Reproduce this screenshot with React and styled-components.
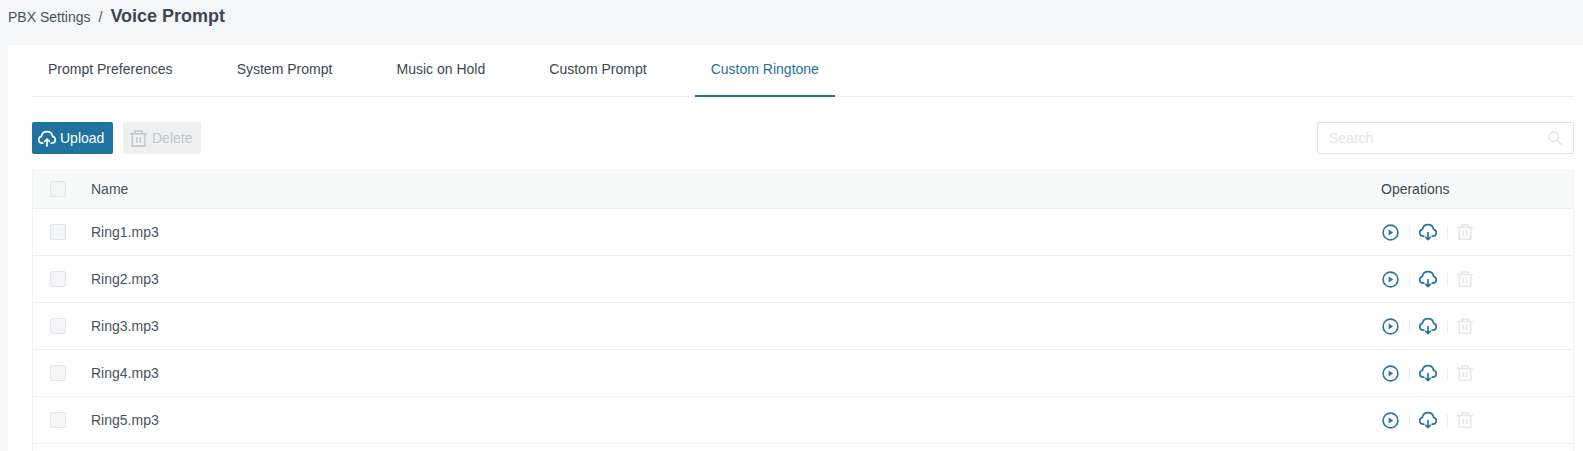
import React from "react";
import styled, { createGlobalStyle } from "styled-components";

const Global = createGlobalStyle`
  html, body { margin: 0; padding: 0; height: 451px; overflow: hidden; background: #f5f6f8; }
  body { font-family: "Liberation Sans", Arial, sans-serif; font-size: 14px; color: #3c4654; }
`;

const Page = styled.div`
  width: 1583px;
  height: 451px;
  overflow: hidden;
  display: flex;
  flex-direction: column;
`;
const Header = styled.header`
  height: 45px;
  flex: none;
  box-sizing: border-box;
  padding: 4px 0 0 8px;
  display: flex;
  align-items: baseline;
`;
const Crumb = styled.span`
  font-size: 14px;
  line-height: 24px;
  color: #48525f;
`;
const Sep = styled.span`
  font-size: 14px;
  line-height: 24px;
  color: #48525f;
  margin: 0 8px;
`;
const Title = styled.h1`
  margin: 0;
  font-size: 18px;
  line-height: 24px;
  font-weight: 700;
  color: #3c4654;
`;
const Card = styled.main`
  flex: 1;
  min-height: 0;
  margin-left: 8px;
  background: #fff;
  padding: 0 9px 0 24px;
  display: flex;
  flex-direction: column;
`;
const Tabs = styled.nav`
  height: 52px;
  flex: none;
  box-sizing: border-box;
  display: flex;
  gap: 32.15px;
  border-bottom: 1px solid #eceef0;
`;
const Tab = styled.div`
  height: 52px;
  box-sizing: border-box;
  padding: 0 16px 2px;
  display: flex;
  align-items: center;
  color: ${(p) => (p.$active ? "#20739f" : "#3c4654")};
  border-bottom: 2px solid ${(p) => (p.$active ? "#20739f" : "transparent")};
`;
const Toolbar = styled.div`
  margin-top: 25px;
  height: 32px;
  flex: none;
  display: flex;
  align-items: center;
  gap: 10px;
`;
const Button = styled.button`
  width: ${(p) => (p.$disabled ? "78px" : "81px")};
  height: 32px;
  box-sizing: border-box;
  border: 0;
  border-radius: 2px;
  padding: 0 0 0 ${(p) => (p.$disabled ? "7px" : "6px")};
  display: flex;
  align-items: center;
  gap: ${(p) => (p.$disabled ? "5px" : "4px")};
  font: inherit;
  color: ${(p) => (p.$disabled ? "#c3c6cb" : "#fff")};
  background: ${(p) => (p.$disabled ? "#eef0f2" : "#20739f")};
`;
const Search = styled.div`
  margin-left: auto;
  width: 257px;
  height: 32px;
  box-sizing: border-box;
  border: 1px solid #e2e3e5;
  border-radius: 2px;
  padding: 0 11px;
  display: flex;
  align-items: center;
  justify-content: space-between;
`;
const Placeholder = styled.span`
  color: #e2e5e9;
`;
const Table = styled.div`
  margin-top: 16px;
  flex: 1;
  border: 1px solid #f0f1f2;
  border-bottom: 0;
`;
const HeadRow = styled.div`
  height: 38px;
  box-sizing: border-box;
  display: flex;
  align-items: center;
  padding-left: 17px;
  padding-bottom: 1px;
  background: #f8f9f9;
  border-bottom: 1px solid #eceeef;
`;
const Row = styled.div`
  height: 47px;
  box-sizing: border-box;
  display: flex;
  align-items: center;
  padding-left: 17px;
  border-bottom: 1px solid #eceeef;
`;
const Check = styled.span`
  flex: none;
  width: 16px;
  height: 16px;
  box-sizing: border-box;
  border: 1px solid #e3e5e8;
  border-radius: 2px;
  background: #f4f5f7;
`;
const Name = styled.span`
  flex: 1;
  margin-left: 25px;
  color: #48525f;
`;
const OpsHead = styled.span`
  width: 192px;
  flex: none;
`;
const Ops = styled.div`
  width: 192px;
  flex: none;
  box-sizing: border-box;
  padding-left: 1px;
  display: flex;
  align-items: center;
`;
const Divider = styled.span`
  width: 1px;
  height: 13px;
  background: #eceef0;
  margin: 0 9.5px;
`;

const CloudUp = ({ color = "#fff" }) => (
  <svg width="18" height="18" viewBox="0 0 18 18" fill="none" stroke={color} strokeWidth="1.7" strokeLinecap="round" strokeLinejoin="round">
    <path d="M4.8 14.2H4.3A3.5 3.5 0 0 1 3.4 7.3 5.7 5.7 0 0 1 14.6 7.3 3.5 3.5 0 0 1 13.7 14.2H13.2" />
    <path d="M9 17V10.2M6.6 12.4 9 10l2.4 2.4" />
  </svg>
);
const CloudDown = ({ color = "#2676a2" }) => (
  <svg width="18" height="18" viewBox="0 0 18 18" fill="none" stroke={color} strokeWidth="1.7" strokeLinecap="round" strokeLinejoin="round">
    <path d="M4.8 13.2H4.3A3.5 3.5 0 0 1 3.4 6.3 5.7 5.7 0 0 1 14.6 6.3 3.5 3.5 0 0 1 13.7 13.2H13.2" />
    <path d="M9 9.6V16.6M6.8 14.4 9 16.6l2.2-2.2" />
  </svg>
);
const Trash = ({ size = 16, color = "#e4e6e8" }) => (
  <svg width={size} height={size} viewBox="0 0 16 16" fill="none" stroke={color} strokeWidth="1.5">
    <path d="M0 3.6H16M4.8 3.6V1H11.2V3.6M2.2 3.6V15.2H13.8V3.6M6.4 6.8V12M9.6 6.8V12" />
  </svg>
);
const Play = () => (
  <svg width="17" height="17" viewBox="0 0 17 17" fill="none">
    <circle cx="8.5" cy="8.5" r="7.4" stroke="#2676a2" strokeWidth="1.6" />
    <path d="M6.6 5.6l4.6 2.9-4.6 2.9z" fill="#2676a2" />
  </svg>
);
const SearchIcon = () => (
  <svg width="14" height="14" viewBox="0 0 14 14" fill="none" stroke="#dfe1e4" strokeWidth="1.3" strokeLinecap="round">
    <circle cx="5.7" cy="5.7" r="4.7" />
    <path d="M9.2 9.2l4 4" />
  </svg>
);

const tabs = ["Prompt Preferences", "System Prompt", "Music on Hold", "Custom Prompt", "Custom Ringtone"];
const files = ["Ring1.mp3", "Ring2.mp3", "Ring3.mp3", "Ring4.mp3", "Ring5.mp3"];

export default function App() {
  return (
    <Page>
      <Global />
      <Header>
        <Crumb>PBX Settings</Crumb>
        <Sep>/</Sep>
        <Title>Voice Prompt</Title>
      </Header>
      <Card>
        <Tabs>
          {tabs.map((t) => (
            <Tab key={t} $active={t === "Custom Ringtone"}>{t}</Tab>
          ))}
        </Tabs>
        <Toolbar>
          <Button><CloudUp />Upload</Button>
          <Button $disabled><Trash size={17} color="#c3c6cb" />Delete</Button>
          <Search>
            <Placeholder>Search</Placeholder>
            <SearchIcon />
          </Search>
        </Toolbar>
        <Table>
          <HeadRow>
            <Check />
            <Name>Name</Name>
            <OpsHead>Operations</OpsHead>
          </HeadRow>
          {files.map((f) => (
            <Row key={f}>
              <Check />
              <Name>{f}</Name>
              <Ops>
                <Play />
                <Divider />
                <CloudDown />
                <Divider />
                <Trash />
              </Ops>
            </Row>
          ))}
        </Table>
      </Card>
    </Page>
  );
}
